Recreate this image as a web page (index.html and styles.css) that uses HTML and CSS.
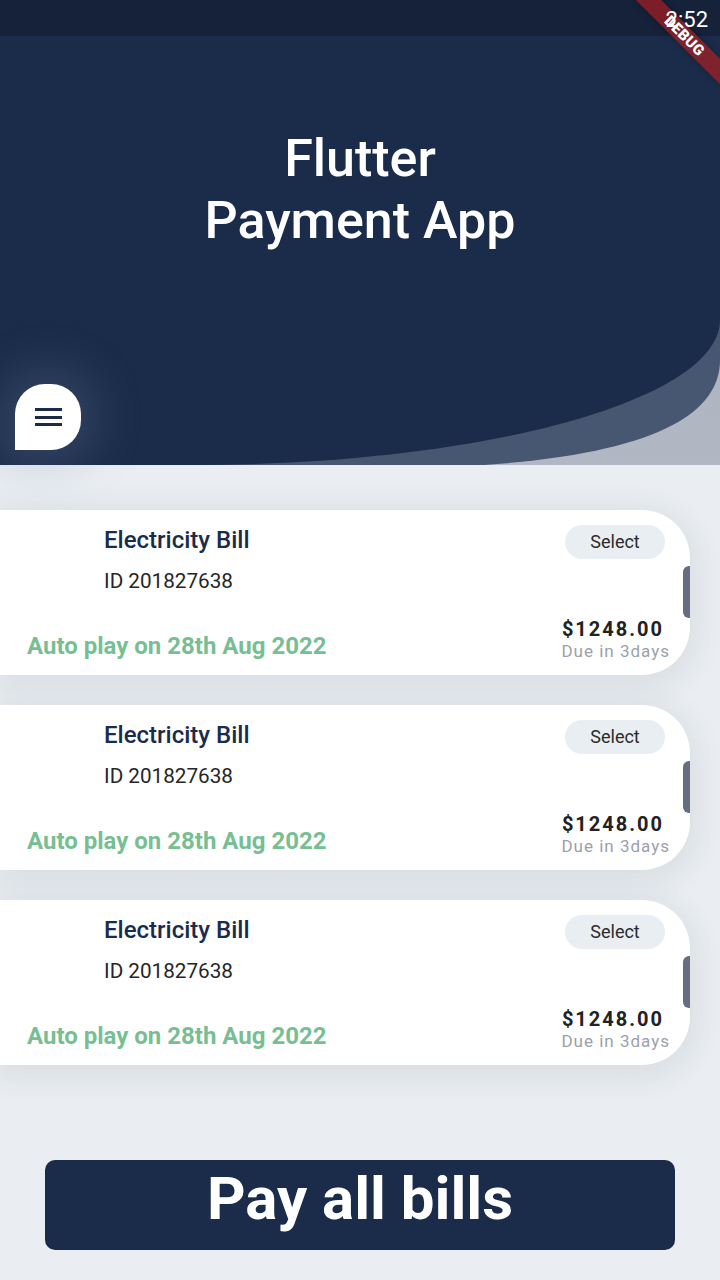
FILE: index.html
```html
<!DOCTYPE html>
<html lang="en">
<head>
<meta charset="utf-8">
<title>Flutter Payment App</title>
<link rel="stylesheet" href="styles.css">
</head>
<body>
<div class="screen">
  <div class="status-bar"><span class="time">2:52</span></div>
  <div class="debug-banner">DEBUG</div>

  <header class="header">
    <svg class="header-bg" viewBox="0 0 720 429" preserveAspectRatio="none" aria-hidden="true">
      <defs>
        <linearGradient id="greyGrad" x1="0" y1="0" x2="0" y2="1">
          <stop offset="0" stop-color="#a3abb8"/>
          <stop offset="1" stop-color="#b2b8c3"/>
        </linearGradient>
      </defs>
      <rect x="0" y="0" width="720" height="429" fill="url(#greyGrad)"/>
      <path d="M0 0 H720 V324 C720 384 640 426 420 432 L0 432 Z" fill="#475671"/>
      <path d="M0 0 H720 V284 C720 364 484 429 193 429 H0 Z" fill="#1b2c4b"/>
    </svg>
    <h1 class="title">Flutter<br>Payment App</h1>
    <button class="menu-btn" aria-label="Menu">
      <span class="menu-line"></span>
      <span class="menu-line"></span>
      <span class="menu-line"></span>
    </button>
  </header>

  <main class="bills">
    <div class="card">
      <div class="card-top">
        <div class="card-info">
          <div class="bill-name">Electricity Bill</div>
          <div class="bill-id">ID 201827638</div>
        </div>
        <div class="select-pill">Select</div>
      </div>
      <div class="card-bottom">
        <div class="autoplay">Auto play on 28th Aug 2022</div>
        <div class="amount-box">
          <div class="amount">$1248.00</div>
          <div class="due">Due in 3days</div>
        </div>
      </div>
      <span class="card-tab"></span>
    </div>

    <div class="card">
      <div class="card-top">
        <div class="card-info">
          <div class="bill-name">Electricity Bill</div>
          <div class="bill-id">ID 201827638</div>
        </div>
        <div class="select-pill">Select</div>
      </div>
      <div class="card-bottom">
        <div class="autoplay">Auto play on 28th Aug 2022</div>
        <div class="amount-box">
          <div class="amount">$1248.00</div>
          <div class="due">Due in 3days</div>
        </div>
      </div>
      <span class="card-tab"></span>
    </div>

    <div class="card">
      <div class="card-top">
        <div class="card-info">
          <div class="bill-name">Electricity Bill</div>
          <div class="bill-id">ID 201827638</div>
        </div>
        <div class="select-pill">Select</div>
      </div>
      <div class="card-bottom">
        <div class="autoplay">Auto play on 28th Aug 2022</div>
        <div class="amount-box">
          <div class="amount">$1248.00</div>
          <div class="due">Due in 3days</div>
        </div>
      </div>
      <span class="card-tab"></span>
    </div>
  </main>

  <button class="pay-btn">Pay all bills</button>
</div>
</body>
</html>
```
FILE: styles.css
```css
* {
  box-sizing: border-box;
}

html, body {
  margin: 0;
  padding: 0;
}

body {
  width: 720px;
  height: 1280px;
  overflow: hidden;
  background: #e9eef2;
  font-family: Roboto, "Noto Sans", "Liberation Sans", sans-serif;
}

.screen {
  position: relative;
  width: 720px;
  height: 1280px;
  display: flex;
  flex-direction: column;
  overflow: hidden;
  background: #eaeef2;
}

/* status bar */
.status-bar {
  height: 36px;
  flex: none;
  background: #15223a;
  display: flex;
  justify-content: flex-end;
  padding-right: 12px;
}

.time {
  color: #ffffff;
  font-size: 22px;
  line-height: 36px;
  padding-top: 2px;
  position: relative;
  z-index: 6;
}

.debug-banner {
  position: absolute;
  left: 625px;
  top: 27px;
  width: 119px;
  height: 18px;
  transform: rotate(45deg);
  background: rgba(183, 28, 28, 0.63);
  box-shadow: 0 0 6px rgba(0, 0, 0, 0.35);
  color: #ffffff;
  font-size: 15px;
  font-weight: 900;
  line-height: 18px;
  text-align: center;
  letter-spacing: 0.3px;
  z-index: 4;
}

/* header */
.header {
  position: relative;
  height: 429px;
  flex: none;
  display: flex;
  flex-direction: column;
  align-items: flex-start;
}

.header-bg {
  position: absolute;
  left: 0;
  top: 0;
  width: 720px;
  height: 429px;
  z-index: 0;
}

.title {
  position: relative;
  z-index: 1;
  align-self: stretch;
  margin: 92px 0 0;
  text-align: center;
  color: #ffffff;
  font-size: 52px;
  font-weight: 500;
  line-height: 62px;
}

.menu-btn {
  position: relative;
  z-index: 1;
  margin: auto 0 15px 15px;
  width: 66px;
  height: 66px;
  padding: 0;
  border: none;
  background: #ffffff;
  border-radius: 30px 30px 30px 0;
  display: flex;
  flex-direction: column;
  align-items: center;
  justify-content: center;
  gap: 4.5px;
  box-shadow: 0 0 46px 16px rgba(120, 140, 170, 0.26);
}

.menu-line {
  display: block;
  width: 27px;
  height: 3px;
  background: #1b2c4b;
}

/* bills */
.bills {
  display: flex;
  flex-direction: column;
  gap: 30px;
  margin-top: 45px;
}

.card {
  position: relative;
  width: 690px;
  height: 165px;
  background: #ffffff;
  border-radius: 0 48px 48px 0;
  box-shadow: 0 6px 30px 6px rgba(40, 50, 70, 0.09);
  display: flex;
  flex-direction: column;
  padding: 15px 0 15px 0;
}

.card-top {
  display: flex;
  justify-content: space-between;
  align-items: flex-start;
}

.card-info {
  padding-left: 104px;
}

.bill-name {
  margin-top: 1px;
  color: #1b2c4b;
  font-size: 24px;
  font-weight: 500;
  line-height: 28px;
}

.bill-id {
  margin-top: 15px;
  color: #262626;
  font-size: 20.7px;
  line-height: 24px;
}

.select-pill {
  margin-right: 25px;
  width: 100px;
  height: 34px;
  border-radius: 17px;
  background: #e9eef2;
  color: #2b2b2b;
  font-size: 18px;
  line-height: 34px;
  text-align: center;
}

.card-bottom {
  margin-top: auto;
  display: flex;
  justify-content: space-between;
  align-items: flex-end;
}

.autoplay {
  padding-left: 27px;
  color: #77bf93;
  font-size: 24px;
  font-weight: 700;
  line-height: 28px;
}

.amount-box {
  padding-right: 20px;
  text-align: right;
}

.amount {
  margin-right: 6px;
  color: #222222;
  font-size: 20px;
  font-weight: 700;
  line-height: 24px;
  letter-spacing: 2px;
}

.due {
  margin-top: 1px;
  color: #9ba1ab;
  font-size: 17px;
  line-height: 18px;
  letter-spacing: 1px;
}

.card-tab {
  position: absolute;
  right: 0;
  top: 56px;
  width: 7px;
  height: 52px;
  background: #636e80;
  border-radius: 6px 0 0 6px;
}

/* pay button */
.pay-btn {
  margin: 95px 45px 0;
  height: 90px;
  flex: none;
  border: none;
  border-radius: 10px;
  background: #1b2c4b;
  color: #ffffff;
  font-family: Roboto, "Noto Sans", "Liberation Sans", sans-serif;
  font-size: 60px;
  font-weight: 700;
  line-height: 78px;
  padding: 0;
  display: flex;
  justify-content: center;
  align-items: flex-start;
}
```
